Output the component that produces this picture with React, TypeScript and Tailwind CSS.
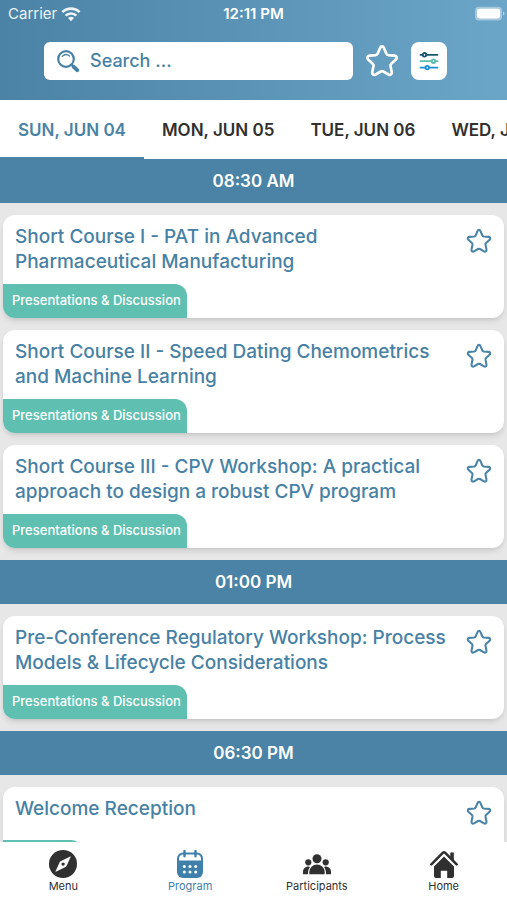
import React, { useState } from 'react';

interface Session {
  title: string;
  tag?: string;
}

interface TimeSlot {
  time: string;
  sessions: Session[];
}

const days = ['SUN, JUN 04', 'MON, JUN 05', 'TUE, JUN 06', 'WED, JUN 07'];

const slots: TimeSlot[] = [
  {
    time: '08:30 AM',
    sessions: [
      { title: 'Short Course I - PAT in Advanced Pharmaceutical Manufacturing', tag: 'Presentations & Discussion' },
      { title: 'Short Course II - Speed Dating Chemometrics and Machine Learning', tag: 'Presentations & Discussion' },
      { title: 'Short Course III - CPV Workshop: A practical approach to design a robust CPV program', tag: 'Presentations & Discussion' },
    ],
  },
  {
    time: '01:00 PM',
    sessions: [
      { title: 'Pre-Conference Regulatory Workshop: Process Models & Lifecycle Considerations', tag: 'Presentations & Discussion' },
    ],
  },
  {
    time: '06:30 PM',
    sessions: [{ title: 'Welcome Reception' }],
  },
];

const StarIcon = ({ className }: { className: string }) => (
  <svg className={className} viewBox="0 0 24 24" fill="none" stroke="currentColor" strokeWidth={1.9} strokeLinejoin="round">
    <path d="M10.7 2.7C11.2 1.4 12.8 1.4 13.3 2.7L15 6.7Q15.4 7.6 16.4 7.8L20.9 8.2C22.4 8.4 22.9 9.9 21.8 10.9L18.5 13.9Q17.8 14.6 18 15.5L18.9 19.9C19.2 21.4 17.9 22.2 16.6 21.5L12.9 19.4Q12 18.9 11.1 19.4L7.4 21.5C6.1 22.2 4.8 21.4 5.1 19.9L6 15.5Q6.2 14.6 5.5 13.9L2.2 10.9C1.1 9.9 1.6 8.4 3.1 8.2L7.6 7.8Q8.6 7.6 9 6.7Z" />
  </svg>
);

const WifiIcon = () => (
  <svg className="w-5 h-4" viewBox="0 0 20 16" fill="none" stroke="currentColor" strokeWidth={2.6}>
    <path d="M1.4 6.2a12.2 12.2 0 0 1 17.2 0" />
    <path d="M4.6 9.7a7.6 7.6 0 0 1 10.8 0" />
    <path d="M10 15.2l-3-3.1a4.3 4.3 0 0 1 6 0z" fill="currentColor" stroke="none" />
  </svg>
);

const BatteryIcon = () => (
  <svg className="w-8 h-4" viewBox="0 0 32 16">
    <rect x="0" y="0.8" width="27" height="13.6" rx="4" fill="#fff" fillOpacity={0.4} />
    <rect x="2" y="2.8" width="23" height="9.6" rx="2.4" fill="#fff" />
    <path d="M28 5.6v4q1.6-.6 1.6-2t-1.6-2z" fill="#fff" fillOpacity={0.5} />
  </svg>
);

const SearchIcon = () => (
  <svg className="w-6 h-6 shrink-0" viewBox="0 0 24 24" fill="none" stroke="currentColor" strokeLinecap="round">
    <circle cx="10" cy="10" r="7.8" strokeWidth={2.2} />
    <path d="M6.2 7.4Q9.8 3.8 13.4 7" strokeWidth={1.3} />
    <path d="M15.6 15.6l2 2" strokeWidth={2.4} />
    <path d="M17.8 17.8l3.4 3.4" strokeWidth={4} />
  </svg>
);

const FilterIcon = () => (
  <svg className="w-5 h-5" viewBox="0 0 20 20" fill="none" strokeWidth={1.8} strokeLinecap="round">
    <g stroke="#17566e">
      <path d="M1.5 3.8h2.3M7.2 3.8h11.3" />
      <circle cx="5.5" cy="3.8" r="1.8" />
    </g>
    <g stroke="#5bbfae">
      <path d="M1.5 10.2h11.3M16.2 10.2h2.3" />
      <circle cx="14.5" cy="10.2" r="1.8" />
    </g>
    <g stroke="#1c8fd6">
      <path d="M1.5 16.6h5M9.9 16.6h8.6" />
      <circle cx="8.2" cy="16.6" r="1.8" />
    </g>
  </svg>
);

const CompassIcon = () => (
  <svg className="w-7 h-7" viewBox="0 0 28 28">
    <circle cx="14" cy="14" r="14" fill="currentColor" />
    <path d="M21.4 6.8L17 16.4 6.8 21.4 11.2 11.8z" fill="#fff" stroke="#fff" strokeWidth={0.6} strokeLinejoin="round" />
    <circle cx="14.1" cy="14.1" r="1.7" fill="currentColor" />
  </svg>
);

const CalendarIcon = () => (
  <svg className="w-7 h-7" viewBox="0 0 28 28" fill="none">
    <path d="M1 10.6h26V22a6 6 0 0 1-6 6H7a6 6 0 0 1-6-6z" fill="currentColor" />
    <path d="M2 11V8.5a5 5 0 0 1 5-5h14a5 5 0 0 1 5 5V11" stroke="currentColor" strokeWidth={2} />
    <path d="M8.5 1v5.2M19.5 1v5.2" stroke="currentColor" strokeWidth={2.4} strokeLinecap="round" />
    <g fill="#fff">
      <circle cx="8.3" cy="16.6" r="1.5" />
      <circle cx="14" cy="16.6" r="1.5" />
      <circle cx="19.7" cy="16.6" r="1.5" />
      <circle cx="8.3" cy="22" r="1.5" />
      <circle cx="14" cy="22" r="1.5" />
      <circle cx="19.7" cy="22" r="1.5" />
    </g>
  </svg>
);

const PeopleIcon = () => (
  <svg className="w-7 h-7" viewBox="0 0 28 28" fill="currentColor">
    <circle cx="14" cy="8.8" r="4.5" />
    <circle cx="5.3" cy="12.3" r="3.1" />
    <circle cx="22.7" cy="12.3" r="3.1" />
    <path d="M6.3 24.2v-2.4a7.7 7.2 0 0 1 15.4 0v2.4z" />
    <path d="M0 24.2v-2.4c0-3.2 2.2-5.2 5.4-5.3q1 0 1.6.4A9 9 0 0 0 5 22v2.2zM28 24.2v-2.4c0-3.2-2.2-5.2-5.4-5.3q-1 0-1.6.4A9 9 0 0 1 23 22v2.2z" />
  </svg>
);

const HomeIcon = () => (
  <svg className="w-7 h-7" viewBox="0 0 28 28" fill="currentColor">
    <path d="M1.4 14.4L13 2.7q1-.9 2 0l11.6 11.7" fill="none" stroke="currentColor" strokeWidth={2.6} strokeLinecap="round" strokeLinejoin="round" />
    <path d="M20.6 2.8h3v7.6l-3-3z" stroke="currentColor" strokeWidth={0.6} strokeLinejoin="round" />
    <path d="M14 6.4l10 10V26q0 2-2 2h-4.8v-7.2h-6.4V28H6q-2 0-2-2v-9.6z" />
  </svg>
);

const navItems = [
  { label: 'Menu', icon: CompassIcon },
  { label: 'Program', icon: CalendarIcon },
  { label: 'Participants', icon: PeopleIcon },
  { label: 'Home', icon: HomeIcon },
];

const SessionCard: React.FC<{ session: Session }> = ({ session }) => (
  <article className="bg-white rounded-xl shadow-md overflow-hidden">
    <div className="flex items-start justify-between px-3 pt-[9px] pb-[10px]">
      <h3 className="flex-1 min-h-[34px] text-[19px] leading-[25px] font-medium text-[#4781a5]">{session.title}</h3>
      <button aria-label="Add to favorites" className="ml-3 mt-1 text-[#4a84a6]">
        <StarIcon className="w-[26px] h-[26px]" />
      </button>
    </div>
    {session.tag ? (
      <span className="inline-flex items-center h-[34px] pl-[9px] pr-[6px] rounded-tr-xl bg-[#5fc0b2] text-white text-[13px] font-medium align-top">
        {session.tag}
      </span>
    ) : (
      <div className="w-20 h-[34px] rounded-tr-xl bg-[#5fc0b2]"></div>
    )}
  </article>
);

export default function App() {
  const [activeDay, setActiveDay] = useState(days[0]);
  const [activeNav, setActiveNav] = useState('Program');

  return (
    <div className="flex flex-col h-screen overflow-hidden bg-[#e8e7e7] font-['Inter',sans-serif]">
      {/* Header */}
      <header className="shrink-0 bg-linear-to-r from-[#4a83a5] to-[#6ba5c7] text-white pb-5">
        <div className="grid grid-cols-3 items-center h-7 px-2">
          <div className="flex items-center gap-1 text-[15px] text-white/90">
            Carrier
            <WifiIcon />
          </div>
          <span className="text-center text-[15px] font-semibold">12:11 PM</span>
          <div className="flex justify-end -mr-2">
            <BatteryIcon />
          </div>
        </div>
        <div className="flex items-center pl-11 pr-15 pt-[14px]">
          <label className="flex flex-1 min-w-0 items-center gap-[10px] h-[38px] px-3 bg-white rounded-md text-[#4781a5]">
            <SearchIcon />
            <input
              type="search"
              aria-label="Search"
              placeholder="Search ..."
              className="flex-1 min-w-0 text-lg font-medium outline-none placeholder-[#4781a5]"
            />
          </label>
          <button aria-label="Favorites" className="ml-3">
            <StarIcon className="w-[34px] h-[34px]" />
          </button>
          <button aria-label="Filters" className="ml-3 flex items-center justify-center w-9 h-[38px] bg-white rounded-lg">
            <FilterIcon />
          </button>
        </div>
      </header>

      {/* Day tabs */}
      <div role="tablist" className="flex shrink-0 h-[59px] bg-white overflow-x-auto [scrollbar-width:none]">
        {days.map((day) => (
          <button
            key={day}
            role="tab"
            aria-selected={activeDay === day}
            onClick={() => setActiveDay(day)}
            className={`shrink-0 px-[18px] pt-1 border-b-2 text-[17px] font-semibold whitespace-nowrap ${
              activeDay === day ? 'border-[#4a83a5] text-[#4a83a5]' : 'border-transparent text-[#303030]'
            }`}
          >
            {day}
          </button>
        ))}
      </div>

      {/* Program list */}
      <main className="flex-1 min-h-0 overflow-y-auto [scrollbar-width:none]">
        {slots.map((slot) => (
          <section key={slot.time}>
            <h2 className="flex items-center justify-center h-11 pt-[2px] bg-[#4a83a5] text-white text-[17px] font-semibold">{slot.time}</h2>
            <div className="flex flex-col gap-3 px-[3px] py-3">
              {slot.sessions.map((session) => (
                <SessionCard key={session.title} session={session} />
              ))}
            </div>
          </section>
        ))}
      </main>

      {/* Bottom navigation */}
      <nav className="grid grid-cols-4 shrink-0 h-[58px] bg-white">
        {navItems.map(({ label, icon: Icon }) => (
          <button
            key={label}
            onClick={() => setActiveNav(label)}
            className={`flex flex-col items-center pt-2 text-[11px] leading-4 ${activeNav === label ? 'text-[#3f80aa]' : 'text-[#303030]'}`}
          >
            <Icon />
            {label}
          </button>
        ))}
      </nav>
    </div>
  );
}
